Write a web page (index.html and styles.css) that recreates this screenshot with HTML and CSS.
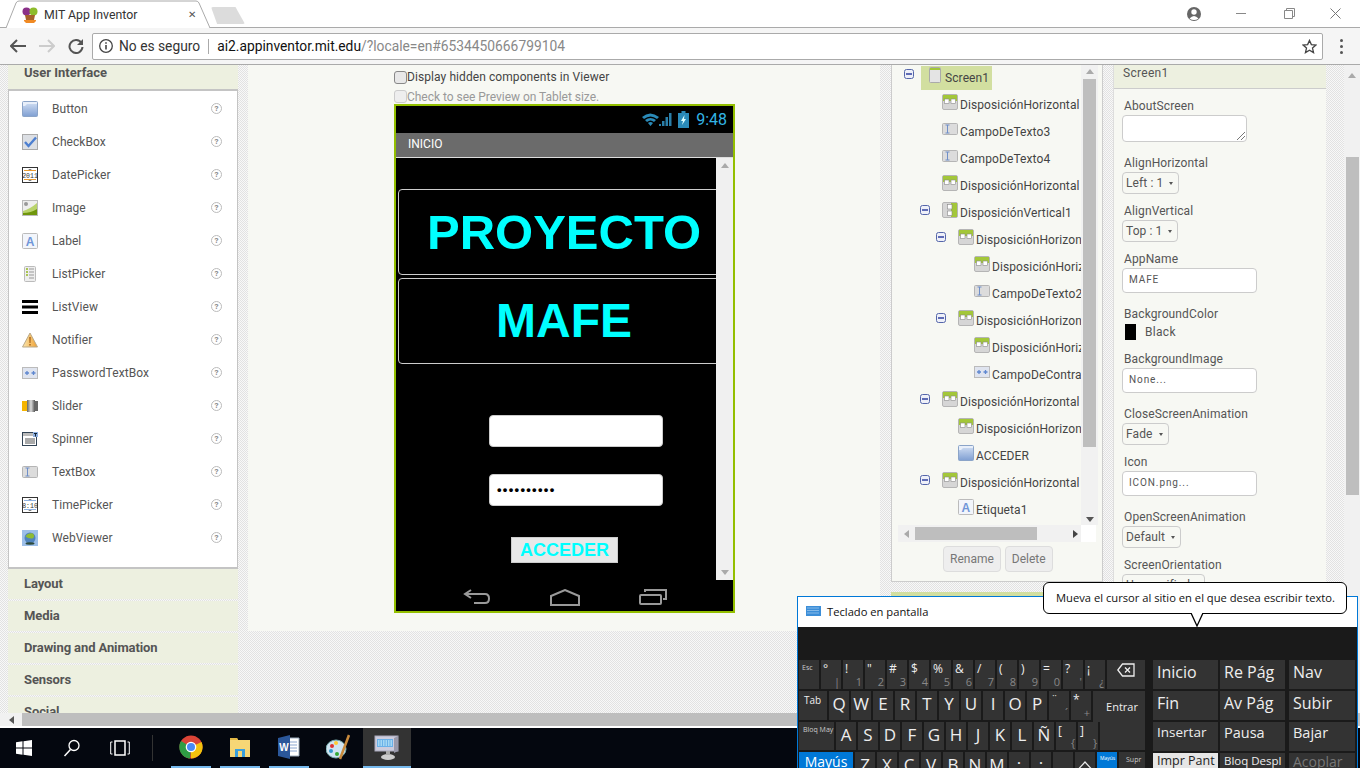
FILE: index.html
```html
<!DOCTYPE html>
<html lang="es">
<head>
<meta charset="utf-8">
<title>MIT App Inventor</title>
<link rel="stylesheet" href="styles.css">
</head>
<body>
<svg class="defs" aria-hidden="true">
  <defs>
    <linearGradient id="g-btn" x1="0" y1="0" x2="0" y2="1"><stop offset="0" stop-color="#d5e2f5"/><stop offset="1" stop-color="#7f9fd2"/></linearGradient>
    <linearGradient id="g-warn" x1="0" y1="0" x2="1" y2="0"><stop offset="0" stop-color="#fbe7b0"/><stop offset="1" stop-color="#f0a030"/></linearGradient>
    <linearGradient id="g-cyl" x1="0" y1="0" x2="1" y2="0"><stop offset="0" stop-color="#666"/><stop offset=".5" stop-color="#ddd"/><stop offset="1" stop-color="#555"/></linearGradient>
    <symbol id="i-btn" viewBox="0 0 16 16"><rect x=".5" y=".5" width="15" height="15" rx="1" fill="url(#g-btn)" stroke="#8ba4c8"/><path d="M1 1h14v2H5L3 5H1z" fill="#e8effa"/></symbol>
    <symbol id="i-check" viewBox="0 0 16 16"><rect x=".5" y=".5" width="15" height="15" fill="#dcdfe4" stroke="#aaa"/><path d="M3 8l3.500 4L14 3.500" fill="none" stroke="#4d7fd0" stroke-width="2.400"/></symbol>
    <symbol id="i-date" viewBox="0 0 16 16"><rect x=".5" y=".5" width="15" height="15" fill="#fff" stroke="#333"/><path d="M2 3.500h12M2 12.500h12" stroke="#e89a30"/><path d="M6 2h4L8 3zM6 14h4l-2-1z" fill="#555"/><text x="8" y="10.500" text-anchor="middle" font-size="6.500" font-family="Liberation Mono" fill="#333">2011</text></symbol>
    <symbol id="i-image" viewBox="0 0 16 16"><rect x=".5" y=".5" width="15" height="15" fill="#eee" stroke="#bbb"/><path d="M1 11Q8 9 15 3v12H1z" fill="#b9d36c"/><path d="M1 15v-2q8 0 14-4v6z" fill="#6f960c"/><circle cx="4" cy="4" r="2" fill="#999"/></symbol>
    <symbol id="i-label" viewBox="0 0 16 16"><rect x=".5" y=".5" width="15" height="15" rx="1" fill="#f2f5fb" stroke="#bbb"/><text x="8" y="13" text-anchor="middle" font-size="12" font-weight="700" font-family="Liberation Sans" fill="#6f95d8">A</text></symbol>
    <symbol id="i-list" viewBox="0 0 16 16"><rect x="2.500" y=".5" width="11" height="15" rx="1" fill="#eee" stroke="#bbb"/><path d="M4 3h2M4 6h2M4 9h2" stroke="#94b820" stroke-width="1.500"/><path d="M7 3h5M7 6h5M7 9h5M7 12h5" stroke="#999"/></symbol>
    <symbol id="i-lview" viewBox="0 0 16 16"><path d="M0 1h16v3H0zM0 6.500h16v3H0zM0 12h16v3H0z" fill="#000"/></symbol>
    <symbol id="i-warn" viewBox="0 0 16 16"><path d="M8 1l7.500 14H.5z" fill="url(#g-warn)" stroke="#b9a98a"/><path d="M7.300 5h1.400l-.2 6h-1zM7.300 12h1.400v1.500H7.300z" fill="#a05a10"/></symbol>
    <symbol id="i-pass" viewBox="0 0 16 16"><rect x=".5" y="2.500" width="15" height="11" fill="#dfe4ef" stroke="#bbb"/><path d="M3 8h4M5 6v4M9.500 8h4M11.500 6v4" stroke="#5f87cf" stroke-width="1.300"/></symbol>
    <symbol id="i-slider" viewBox="0 0 16 16"><rect y="3" width="6" height="10" fill="#f5b400"/><rect x="5" y="2" width="8" height="12" fill="url(#g-cyl)"/><rect x="13" y="3" width="3" height="10" fill="#666"/></symbol>
    <symbol id="i-spin" viewBox="0 0 16 16"><rect x=".5" y="1.500" width="14" height="13" fill="#fff" stroke="#345"/><rect x="1" y="2" width="10" height="3" fill="#bbb"/><rect x="11" y="1" width="5" height="5" fill="#8fb0e0"/><path d="M12 2.500h3M13.500 2.500v3" stroke="#123"/><path d="M3 8h10M3 10h10M3 12h10" stroke="#555"/></symbol>
    <symbol id="i-text" viewBox="0 0 16 16"><rect x=".5" y="2.500" width="15" height="11" rx="1" fill="#dcdcdc" stroke="#b5b5b5"/><path d="M3.500 4h4M3.500 12h4M5.500 4v8" stroke="#6f8fc8"/></symbol>
    <symbol id="i-time" viewBox="0 0 16 16"><rect x=".5" y=".5" width="15" height="15" fill="#fff" stroke="#333"/><path d="M2 3.500h12M2 12.500h12" stroke="#8fb0e0"/><path d="M6 2h4L8 3zM6 14h4l-2-1z" fill="#555"/><text x="8" y="10.500" text-anchor="middle" font-size="6.500" font-family="Liberation Mono" fill="#333">8:10</text></symbol>
    <symbol id="i-web" viewBox="0 0 16 16"><rect width="16" height="16" fill="#9dbfe9"/><circle cx="8" cy="8" r="5.500" fill="#4f83bd"/><path d="M3.500 6.500q2.500-4 7.500-3 2.500 3-.5 5-4 .5-7-2z" fill="#8fbb34"/><ellipse cx="8" cy="13.500" rx="4.500" ry="1.200" fill="#2c4a3c"/></symbol>
    <symbol id="i-hz" viewBox="0 0 16 16"><rect x=".5" y=".5" width="15" height="15" rx="1.500" fill="#d6d6d6" stroke="#b5b5b5"/><path d="M1 1h14v6H1z" fill="#a3c739"/><rect x="2.500" y="5" width="4.500" height="4.500" fill="#fff" stroke="#888" stroke-width=".6"/><rect x="9" y="5" width="4.500" height="4.500" fill="#fff" stroke="#888" stroke-width=".6"/></symbol>
    <symbol id="i-vt" viewBox="0 0 16 16"><rect x=".5" y=".5" width="15" height="15" rx="1.500" fill="#d6d6d6" stroke="#b5b5b5"/><path d="M9 1h6v14H9z" fill="#a3c739"/><rect x="5.500" y="2.500" width="4.500" height="4.500" fill="#fff" stroke="#888" stroke-width=".6"/><rect x="5.500" y="9" width="4.500" height="4.500" fill="#fff" stroke="#888" stroke-width=".6"/></symbol>
    <symbol id="i-screen" viewBox="0 0 12 16"><rect x=".5" y=".5" width="11" height="15" rx="1" fill="#e4e4e4" stroke="#aaa"/><rect x="1" y="1" width="10" height="2" fill="#a3c739"/></symbol>
    <symbol id="i-minus" viewBox="0 0 10 10"><rect x=".5" y=".5" width="9" height="9" rx="2" fill="#eef0f8" stroke="#5566aa"/><path d="M2 5h6" stroke="#223399" stroke-width="1.400"/></symbol>
  </defs>
</svg>

<header class="tabbar">
  <div class="tab">
    <svg class="tab-shape" viewBox="0 0 206 28" width="206" height="28"><path d="M0 28h1L11 3q1-2 3-2h177q2 0 3 2l11 25h1" fill="#fff" stroke="#aaa"/></svg>
    <svg class="favicon" viewBox="0 0 16 16" width="16" height="16"><circle cx="4.500" cy="4.500" r="4" fill="#8a2f88"/><circle cx="11.500" cy="4.500" r="4" fill="#8dbb2c"/><path d="M3 8h10l-1 5H4z" fill="#a5602a"/><path d="M2 13h12v1l-2 2H4l-2-2z" fill="#f08a24"/></svg>
    <span class="tab-title">MIT App Inventor</span>
    <span class="tab-close">✕</span>
  </div>
  <div class="newtab"></div>
  <div class="winctl">
    <svg width="16" height="16" viewBox="0 0 16 16"><circle cx="8" cy="8" r="7" fill="#666"/><circle cx="8" cy="6" r="2.700" fill="#fff"/><path d="M3.500 12.500q4.500-5 9 0Q8 15.500 3.500 12.500z" fill="#fff"/></svg>
    <span class="wc-min"></span>
    <svg width="11" height="11" viewBox="0 0 11 11"><path d="M2.500 2.500V.5h8v8h-2M.5 2.500h8v8h-8z" fill="none" stroke="#888"/></svg>
    <svg width="11" height="11" viewBox="0 0 11 11"><path d="M.5.500l10 10M10.500.5l-10 10" stroke="#777"/></svg>
  </div>
</header>

<nav class="toolbar">
  <svg class="tool" width="16" height="14" viewBox="0 0 16 14"><path d="M7 1L1 7l6 6M1 7h15" fill="none" stroke="#555" stroke-width="2"/></svg>
  <svg class="tool" width="16" height="14" viewBox="0 0 16 14"><path d="M9 1l6 6-6 6M15 7H0" fill="none" stroke="#ccc" stroke-width="2"/></svg>
  <svg class="tool" width="16" height="16" viewBox="0 0 16 16"><path d="M13.500 5A6.500 6.500 0 1 0 14.500 9" fill="none" stroke="#555" stroke-width="2"/><path d="M15 1v6H9z" fill="#555"/></svg>
  <div class="omnibox">
    <svg width="14" height="14" viewBox="0 0 14 14"><circle cx="7" cy="7" r="6.300" fill="none" stroke="#444" stroke-width="1.300"/><path d="M6.200 6h1.600v4.500H6.200zM6.200 3.200h1.600v1.600H6.200z" fill="#444"/></svg>
    <span class="insecure">No es seguro</span>
    <span class="omni-sep"></span>
    <span class="url"><b>ai2.appinventor.mit.edu</b>/?locale=en#6534450666799104</span>
    <svg class="star" width="15" height="15" viewBox="0 0 16 16"><path d="M8 1.500l2 4.500 4.900.5-3.700 3.200 1.100 4.800L8 12l-4.300 2.500 1.100-4.800L1.100 6.500 6 6z" fill="none" stroke="#444" stroke-width="1.400"/></svg>
  </div>
  <div class="dots"><i></i><i></i><i></i></div>
</nav>

<main class="page">
  <div class="workspace">
    <section class="palette">
      <h2 class="phead">User Interface</h2>
      <ul class="plist">
        <li class="pitem"><svg class="pic"><use href="#i-btn"/></svg><span class="pname">Button</span><span class="help">?</span></li>
        <li class="pitem"><svg class="pic"><use href="#i-check"/></svg><span class="pname">CheckBox</span><span class="help">?</span></li>
        <li class="pitem"><svg class="pic"><use href="#i-date"/></svg><span class="pname">DatePicker</span><span class="help">?</span></li>
        <li class="pitem"><svg class="pic"><use href="#i-image"/></svg><span class="pname">Image</span><span class="help">?</span></li>
        <li class="pitem"><svg class="pic"><use href="#i-label"/></svg><span class="pname">Label</span><span class="help">?</span></li>
        <li class="pitem"><svg class="pic"><use href="#i-list"/></svg><span class="pname">ListPicker</span><span class="help">?</span></li>
        <li class="pitem"><svg class="pic"><use href="#i-lview"/></svg><span class="pname">ListView</span><span class="help">?</span></li>
        <li class="pitem"><svg class="pic"><use href="#i-warn"/></svg><span class="pname">Notifier</span><span class="help">?</span></li>
        <li class="pitem"><svg class="pic"><use href="#i-pass"/></svg><span class="pname">PasswordTextBox</span><span class="help">?</span></li>
        <li class="pitem"><svg class="pic"><use href="#i-slider"/></svg><span class="pname">Slider</span><span class="help">?</span></li>
        <li class="pitem"><svg class="pic"><use href="#i-spin"/></svg><span class="pname">Spinner</span><span class="help">?</span></li>
        <li class="pitem"><svg class="pic"><use href="#i-text"/></svg><span class="pname">TextBox</span><span class="help">?</span></li>
        <li class="pitem"><svg class="pic"><use href="#i-time"/></svg><span class="pname">TimePicker</span><span class="help">?</span></li>
        <li class="pitem"><svg class="pic"><use href="#i-web"/></svg><span class="pname">WebViewer</span><span class="help">?</span></li>
      </ul>
      <div class="acc">Layout</div>
      <div class="acc">Media</div>
      <div class="acc">Drawing and Animation</div>
      <div class="acc">Sensors</div>
      <div class="acc">Social</div>
    </section>

    <section class="viewer">
      <label class="vcheck"><span class="cbox"></span>Display hidden components in Viewer</label>
      <label class="vcheck off"><span class="cbox"></span>Check to see Preview on Tablet size.</label>
      <div class="phone">
        <div class="status">
          <svg width="34" height="17" viewBox="0 0 34 17"><path d="M1 6q8-7 17 0l-2 2q-6.500-5-13 0zM4 9q5.500-4 11 0l-2 2q-3.500-3-7 0zM7 12q2.500-2 5 0l-2.500 3z" fill="#2a8ab8"/><path d="M18 15h2v-2h-2zM21 15h2.500V10H21zM24.500 15H27V6h-2.500zM28 15h2.500V2H28z" fill="#2a7ea8"/></svg>
          <svg width="11" height="17" viewBox="0 0 11 17"><path d="M3.500 0h4v2H11v15H0V2h3.500z" fill="#2a8ab8"/><path d="M6.500 4L3 10h2l-1 4 4-6H6z" fill="#dff"/></svg>
          <span class="clock">9:48</span>
        </div>
        <div class="title-bar">INICIO</div>
        <div class="screen">
          <div class="scr-main">
            <div class="bigbox big-l">PROYECTO</div>
            <div class="bigbox">MAFE</div>
            <div class="field field-user"></div>
            <div class="field field-pass">••••••••••</div>
            <div class="acceder">ACCEDER</div>
          </div>
          <div class="scr-scroll"><i class="tri up"></i><i class="tri down"></i></div>
        </div>
        <div class="navbar">
          <svg width="28" height="16" viewBox="0 0 28 16"><path d="M8 1L2 5l6 4M2 5h20q4 0 4 4.500T22 14H11" fill="none" stroke="#999" stroke-width="2"/></svg>
          <svg width="30" height="17" viewBox="0 0 30 17"><path d="M1 7l14-6 14 6v9H1z" fill="none" stroke="#999" stroke-width="2"/></svg>
          <svg width="28" height="16" viewBox="0 0 28 16"><rect x="1" y="6" width="21" height="9" rx="1" fill="none" stroke="#999" stroke-width="2"/><path d="M6 3V1h21v9h-3" fill="none" stroke="#999" stroke-width="2"/></svg>
        </div>
      </div>
    </section>

    <div class="compcol">
      <section class="comps">
        <div class="treewrap">
          <ul class="tree">
            <li class="node first"><svg class="tog"><use href="#i-minus"/></svg><span class="sel"><svg class="nic-s"><use href="#i-screen"/></svg>Screen1</span></li>
            <li class="node l1"><svg class="nic"><use href="#i-hz"/></svg>DisposiciónHorizontal</li>
            <li class="node l1"><svg class="nic"><use href="#i-text"/></svg>CampoDeTexto3</li>
            <li class="node l1"><svg class="nic"><use href="#i-text"/></svg>CampoDeTexto4</li>
            <li class="node l1"><svg class="nic"><use href="#i-hz"/></svg>DisposiciónHorizontal</li>
            <li class="node l1 p"><svg class="tog"><use href="#i-minus"/></svg><svg class="nic"><use href="#i-vt"/></svg>DisposiciónVertical1</li>
            <li class="node l2 p"><svg class="tog"><use href="#i-minus"/></svg><svg class="nic"><use href="#i-hz"/></svg>DisposiciónHorizontal</li>
            <li class="node l3"><svg class="nic"><use href="#i-hz"/></svg>DisposiciónHorizontal</li>
            <li class="node l3"><svg class="nic"><use href="#i-text"/></svg>CampoDeTexto2</li>
            <li class="node l2 p"><svg class="tog"><use href="#i-minus"/></svg><svg class="nic"><use href="#i-hz"/></svg>DisposiciónHorizontal</li>
            <li class="node l3"><svg class="nic"><use href="#i-hz"/></svg>DisposiciónHorizontal</li>
            <li class="node l3"><svg class="nic"><use href="#i-pass"/></svg>CampoDeContraseña</li>
            <li class="node l1 p"><svg class="tog"><use href="#i-minus"/></svg><svg class="nic"><use href="#i-hz"/></svg>DisposiciónHorizontal</li>
            <li class="node l2"><svg class="nic"><use href="#i-hz"/></svg>DisposiciónHorizontal</li>
            <li class="node l2"><svg class="nic"><use href="#i-btn"/></svg>ACCEDER</li>
            <li class="node l1 p"><svg class="tog"><use href="#i-minus"/></svg><svg class="nic"><use href="#i-hz"/></svg>DisposiciónHorizontal</li>
            <li class="node l2"><svg class="nic"><use href="#i-label"/></svg>Etiqueta1</li>
          </ul>
          <div class="vs-tree"><i class="tri up"></i><b class="vs-thumb"></b><i class="tri down dark"></i></div>
        </div>
        <div class="hs-tree"><div class="hs-track"><i class="tri left"></i><b class="hs-thumb"></b><i class="tri right"></i></div></div>
        <div class="comp-btns"><span class="cbtn">Rename</span><span class="cbtn">Delete</span></div>
      </section>
      <div class="mediahead"></div>
    </div>

    <section class="props">
      <h2 class="prhead">Screen1</h2>
      <div class="prbody">
        <div class="plabel">AboutScreen</div>
        <div class="ctl area"><svg width="8" height="8" viewBox="0 0 8 8"><path d="M8 0L0 8M8 4L4 8" stroke="#777"/></svg></div>
        <div class="plabel">AlignHorizontal</div>
        <div class="ctl sel-ctl w57">Left : 1<i></i></div>
        <div class="plabel">AlignVertical</div>
        <div class="ctl sel-ctl w56">Top : 1<i></i></div>
        <div class="plabel">AppName</div>
        <div class="ctl txt">MAFE</div>
        <div class="plabel">BackgroundColor</div>
        <div class="colorrow"><span class="swatch"></span>Black</div>
        <div class="plabel">BackgroundImage</div>
        <div class="ctl txt">None...</div>
        <div class="plabel">CloseScreenAnimation</div>
        <div class="ctl sel-ctl w47">Fade<i></i></div>
        <div class="plabel">Icon</div>
        <div class="ctl txt">ICON.png...</div>
        <div class="plabel">OpenScreenAnimation</div>
        <div class="ctl sel-ctl w59">Default<i></i></div>
        <div class="plabel">ScreenOrientation</div>
        <div class="ctl sel-ctl w83">Unspecified<i></i></div>
      </div>
    </section>

    <div class="vs-page"><i class="tri up"></i><b class="vs-page-thumb"></b></div>
  </div>
  <div class="hs-page"><span class="hs-btn"><i class="tri left dark"></i></span><b class="hs-page-thumb"></b></div>
</main>

<footer class="taskbar">
  <span class="tb tb-plain"><svg width="16" height="16" viewBox="0 0 16 16"><path d="M0 2.300l6.500-1v6.200H0zM7.500 1.200L16 0v7.500H7.500zM0 8.500h6.500v6.200l-6.500-1zM7.500 8.500H16V16l-8.500-1.200z" fill="#fff"/></svg></span>
  <span class="tb tb-plain"><svg width="18" height="18" viewBox="0 0 18 18"><circle cx="11" cy="6.500" r="5" fill="none" stroke="#fff" stroke-width="1.300"/><path d="M7.500 10.500L1.500 17" stroke="#fff" stroke-width="1.500"/></svg></span>
  <span class="tb tb-plain"><svg width="20" height="16" viewBox="0 0 20 16"><path d="M5 1h10v14H5z" fill="none" stroke="#fff" stroke-width="1.500"/><path d="M2.500 2H.7v12h1.800M17.500 2h1.800v12h-1.800" fill="none" stroke="#fff"/></svg></span>
  <span class="tb-sep"></span>
  <span class="tb tb-app"><svg width="24" height="24" viewBox="0 0 24 24"><circle cx="12" cy="12" r="11.500" fill="#db4437"/><path d="M12 12L22.500 7A11.500 11.500 0 0 1 12 23.500z" fill="#f4c20d"/><path d="M12 12l-1 11.500A11.500 11.500 0 0 1 2 6z" fill="#2f9e44"/><circle cx="12" cy="12" r="5.300" fill="#fff"/><circle cx="12" cy="12" r="4" fill="#4a8af4"/></svg></span>
  <span class="tb tb-app"><svg width="22" height="22" viewBox="0 0 22 22"><path d="M1 2h7l1 2h12v17H1z" fill="#f6d776"/><path d="M1 2h7l1 2H1z" fill="#e2b846"/><path d="M6 13h10v8H6z" fill="#3aa0dc"/><path d="M9 15h4v6H9z" fill="#f6d776"/></svg></span>
  <span class="tb tb-app"><svg width="22" height="24" viewBox="0 0 22 24"><path d="M9 3h12v18H9z" fill="#fff" stroke="#9ab"/><path d="M11 7h8M11 10h8M11 13h8M11 16h8" stroke="#8aa6d0"/><path d="M0 3l12-3v24L0 21z" fill="#2b579a"/><text x="6" y="16" text-anchor="middle" font-size="10" font-weight="700" font-family="Liberation Sans" fill="#fff">W</text></svg></span>
  <span class="tb tb-idle"><svg width="24" height="26" viewBox="0 0 24 26"><ellipse cx="10" cy="15" rx="10" ry="9" fill="#cfe4f2" stroke="#7aa"/><circle cx="6" cy="12" r="2" fill="#d33"/><circle cx="10" cy="9" r="2" fill="#fc3"/><circle cx="5" cy="17" r="2" fill="#39c"/><circle cx="11" cy="20" r="2" fill="#3a3"/><path d="M23 1l-9 24" stroke="#c98a3c" stroke-width="2.500"/></svg></span>
  <span class="tb tb-active"><svg width="26" height="28" viewBox="0 0 26 28"><rect x="1" y="3" width="23" height="15" fill="#ccd" stroke="#aab"/><rect x="3" y="6" width="16" height="8" fill="#6ab0e8"/><path d="M4 8h14M4 10h14M4 12h14" stroke="#dff" stroke-dasharray="1.500 1"/><path d="M20 5l4-2v15l-4 2z" fill="#99a"/><ellipse cx="14" cy="24" rx="7" ry="3" fill="#ccc"/><path d="M12 18h4v4h-4z" fill="#aaa"/></svg></span>
</footer>

<section class="kbd">
  <div class="kbd-title">
    <svg width="15" height="10" viewBox="0 0 15 10"><rect width="15" height="10" fill="#3c8ed8"/><path d="M1.500 2h12M1.500 4.500h12M1.500 7h12" stroke="#cfe6fa" stroke-dasharray="1 1"/></svg>
    <span>Teclado en pantalla</span>
  </div>
  <div class="kbd-body">
    <div class="kbd-left">
      <div class="krow">
        <span class="key k-tiny w-esc">Esc</span>
        <span class="key dual"><em>°</em><small>|</small></span>
        <span class="key dual"><em>!</em><small>1</small></span>
        <span class="key dual"><em>"</em><small>2</small></span>
        <span class="key dual"><em>#</em><small>3</small></span>
        <span class="key dual"><em>$</em><small>4</small></span>
        <span class="key dual"><em>%</em><small>5</small></span>
        <span class="key dual"><em>&amp;</em><small>6</small></span>
        <span class="key dual"><em>/</em><small>7</small></span>
        <span class="key dual"><em>(</em><small>8</small></span>
        <span class="key dual"><em>)</em><small>9</small></span>
        <span class="key dual"><em>=</em><small>0</small></span>
        <span class="key dual"><em>?</em><small>'</small></span>
        <span class="key dual"><em>¡</em><small>¿</small></span>
        <span class="key w-back"><svg width="18" height="14" viewBox="0 0 18 14"><path d="M5.500 1H17v12H5.500L.8 7zM8 4.500l5 5M13 4.500l-5 5" fill="none" stroke="#eee" stroke-width="1.300"/></svg></span>
      </div>
      <div class="krow">
        <span class="key k-small w-tab">Tab</span>
        <span class="key">Q</span><span class="key">W</span><span class="key">E</span><span class="key">R</span><span class="key">T</span><span class="key">Y</span><span class="key">U</span><span class="key">I</span><span class="key">O</span><span class="key">P</span>
        <span class="key dual"><em>¨</em><small>´</small></span>
        <span class="key dual"><em>*</em><small>+</small></span>
        <span class="key k-enter w-ent1">Entrar</span>
      </div>
      <div class="krow">
        <span class="key k-tiny w-caps">Bloq May</span>
        <span class="key">A</span><span class="key">S</span><span class="key">D</span><span class="key">F</span><span class="key">G</span><span class="key">H</span><span class="key">J</span><span class="key">K</span><span class="key">L</span><span class="key">Ñ</span>
        <span class="key dual"><em>[</em><small>{</small></span>
        <span class="key dual"><em>]</em><small>}</small></span>
        <span class="key w-ent2"></span>
      </div>
      <div class="krow">
        <span class="key k-blue w-shift">Mayús</span>
        <span class="key">Z</span><span class="key">X</span><span class="key">C</span><span class="key">V</span><span class="key">B</span><span class="key">N</span><span class="key">M</span>
        <span class="key">;</span><span class="key">:</span><span class="key">_</span>
        <span class="key"><svg width="14" height="8" viewBox="0 0 14 8"><path d="M1 7.500L7 1l6 6.500" fill="none" stroke="#eee" stroke-width="1.200"/></svg></span>
        <span class="key k-tiny k-blue2">Mayús</span>
        <span class="key k-tiny w-supr">Supr</span>
      </div>
    </div>
    <div class="kbd-right">
      <span class="nkey">Inicio</span><span class="nkey">Re Pág</span><span class="nkey w-nav">Nav</span>
      <span class="nkey">Fin</span><span class="nkey">Av Pág</span><span class="nkey w-nav">Subir</span>
      <span class="nkey n-15">Insertar</span><span class="nkey n-16">Pausa</span><span class="nkey n-16 w-nav">Bajar</span>
      <span class="nkey n-light">Impr Pant</span><span class="nkey n-13">Bloq Despl</span><span class="nkey n-off w-nav">Acoplar</span>
    </div>
  </div>
</section>

<div class="tip">Mueva el cursor al sitio en el que desea escribir texto.
  <svg class="tip-tail" width="14" height="15" viewBox="0 0 14 15"><path d="M1 0l6 13 6-13" fill="#fff" stroke="#000" stroke-width="1.300"/></svg>
</div>
</body>
</html>
```

FILE: styles.css
```css
* { box-sizing: border-box; }
html, body { margin: 0; padding: 0; }
body {
  width: 1360px; height: 768px; overflow: hidden; position: relative;
  display: flex; flex-direction: column;
  font-family: Roboto, "Liberation Sans", sans-serif; font-size: 12px; color: #444; background: #fff;
}
ul { list-style: none; margin: 0; padding: 0; }
h2 { margin: 0; }
i, em { font-style: normal; }
.defs { display: block; width: 0; height: 0; flex: none; }

/* browser chrome */
.tabbar { height: 28px; flex: none; display: flex; align-items: flex-start; padding-left: 5px; border-bottom: 1px solid #aaa; background: #fff; }
.tab { position: relative; width: 206px; height: 28px; display: flex; align-items: center; padding: 1px 15px 0 17px; }
.tab-shape { position: absolute; left: 0; top: 0; }
.favicon { position: relative; flex: none; }
.tab-title { position: relative; margin-left: 6px; font-size: 12.300px; color: #333; flex: 1; }
.tab-close { position: relative; font-size: 10px; color: #555; }
.newtab { width: 34px; height: 17px; margin-top: 7px; background: #dcdcdc; clip-path: polygon(0 0, 72% 0, 100% 100%, 18% 100%); border-radius: 2px; }
.winctl { margin-left: auto; display: flex; align-items: center; gap: 35px; height: 27px; padding-right: 19px; }
.wc-min { width: 10px; height: 1px; background: #888; margin: 0 3px 0 -1px; }
.toolbar { height: 37px; flex: none; display: flex; align-items: center; padding: 0 0 0 10px; background: #f5f5f5; border-bottom: 1px solid #aaa; }
.tool { margin-right: 13px; flex: none; }
.omnibox { width: 1231px; height: 27px; margin-left: -5px; display: flex; align-items: center; padding: 0 5px 0 6px; background: #fff; border: 1px solid #aaa; border-radius: 2px; }
.insecure { margin-left: 6px; font-size: 13.800px; color: #333; }
.omni-sep { width: 1px; height: 15px; background: #aaa; margin: 0 8px; }
.url { font-size: 13.800px; color: #888; flex: 1; }
.url b { font-weight: 400; color: #111; }
.dots { display: flex; flex-direction: column; gap: 3px; margin-left: 17px; }
.dots i { width: 3px; height: 3px; border-radius: 50%; background: #555; }

/* page */
.page { flex: none; height: 663px; display: flex; flex-direction: column; overflow: hidden; background: repeating-conic-gradient(#e2e2e2 0 25%, #f8f8f8 0 50%) 0 0 / 2px 2px; }
.workspace { height: 648px; flex: none; display: flex; padding-left: 8px; overflow: hidden; }
.tri { display: block; width: 0; height: 0; border: 4px solid transparent; }
.tri.up { border-top: 0; border-bottom: 5px solid #aaa; }
.tri.down { border-bottom: 0; border-top: 5px solid #aaa; }
.tri.down.dark { border-top-color: #555; }
.tri.left { border-left: 0; border-right: 5px solid #aaa; }
.tri.right { border-right: 0; border-left: 5px solid #444; }
.tri.left.dark { border-right-color: #555; }

/* palette */
.palette { width: 230px; flex: none; display: flex; flex-direction: column; }
.phead { height: 24px; flex: none; padding: 0 16px; font-size: 13px; font-weight: 700; color: #555; line-height: 15px; background: #edf0e0; }
.plist { height: 480px; flex: none; padding-top: 1px; background: #fff; border: 1px solid #c4c4c4; border-width: 2px 1px 2px 1px; }
.pitem { height: 33px; display: flex; align-items: center; padding-left: 13px; }
.pic { width: 16px; height: 16px; flex: none; margin-right: 14px; }
.pname { flex: 1; font-size: 12px; color: #555; letter-spacing: .07px; }
.help { width: 11px; height: 11px; margin-right: 15px; border: 1px solid #bbb; border-radius: 50%; font-size: 8px; font-weight: 700; line-height: 9px; text-align: center; color: #888; }
.acc { height: 30px; flex: none; margin-bottom: 2px; padding-left: 16px; font-size: 13px; font-weight: 700; line-height: 30px; letter-spacing: -.1px; color: #555; background: #edf0e0; }

/* viewer */
.viewer { width: 632px; flex: none; margin-left: 10px; height: 566px; padding: 4px 0 0 146px; background: #f7f8f3; }
.vcheck { display: flex; align-items: center; height: 16px; margin-bottom: 4px; font-size: 12px; color: #444; letter-spacing: .08px; }
.vcheck.off { color: #999; height: 15px; margin-bottom: 0; letter-spacing: -.03px; }
.cbox { width: 13px; height: 13px; flex: none; border: 1px solid #888; border-radius: 3px; background: #e8e8e8; }
.vcheck.off .cbox { border-color: #ccc; background: #eee; }
.phone { width: 341px; height: 509px; border: 2px solid #93bf00; background: #000; display: flex; flex-direction: column; }
.status { height: 27px; flex: none; display: flex; align-items: center; justify-content: flex-end; gap: 3px; padding-right: 6px; }
.clock { margin-left: 4px; font-size: 16px; color: #33b5e5; }
.title-bar { height: 25px; flex: none; padding-left: 12px; line-height: 22px; font-size: 12px; color: #fff; background: #6b6b6b; border-bottom: 1px solid #ddd; }
.screen { height: 422px; flex: none; display: flex; overflow: hidden; }
.scr-main { width: 320px; flex: none; overflow: hidden; padding: 31px 0 0 2px; }
.bigbox { width: 332px; height: 86px; margin-bottom: 3px; border: 1px solid #ccc; border-radius: 4px; text-align: center; font: 700 48px/84px "Liberation Sans", sans-serif; color: #0ff; }
.big-l { font-size: 49px; }
.field { width: 174px; height: 32px; margin-left: 91px; border: 1px solid #ccc; border-radius: 4px; background: #fff; }
.field-user { margin-top: 51px; }
.field-pass { margin-top: 27px; padding-left: 7px; font: 700 13px/29px "Liberation Sans", sans-serif; letter-spacing: 1.300px; color: #000; }
.acceder { width: 107px; height: 26px; margin: 31px 0 0 113px; text-align: center; font: 700 18px/24px "Liberation Sans", sans-serif; color: #0ff; background: #e8e8e8; border: 1px solid #ccc; }
.scr-scroll { width: 17px; flex: none; background: #f0f0f0; display: flex; flex-direction: column; align-items: center; justify-content: space-between; padding: 5px 0; }
.navbar { height: 31px; flex: none; display: flex; align-items: center; padding: 3px 0 0 67px; gap: 59px; }

/* components */
.compcol { width: 212px; flex: none; margin-left: 11px; display: flex; flex-direction: column; gap: 10px; }
.comps { height: 517px; flex: none; padding: 0 6px; background: #f7f8f3; border: 1px solid #ccc; border-width: 0 1px 1px 1px; }
.treewrap { display: flex; height: 460px; }
.tree { width: 183px; flex: none; overflow: hidden; }
.node { height: 27px; width: 300px; display: flex; align-items: center; font-size: 12px; color: #444; letter-spacing: .1px; white-space: nowrap; }
.node.first { height: 26px; padding-left: 6px; align-items: flex-start; }
.tog { width: 10px; height: 10px; flex: none; margin: -5px 6px 0 0; }
.first .tog { margin: 4px 7px 0 0; }
.sel { height: 24px; width: 71px; margin-top: 1px; display: flex; align-items: center; padding-left: 8px; background: #d2dfa0; }
.nic-s { width: 12px; height: 16px; flex: none; margin: -6px 4px 0 0; }
.nic { width: 16px; height: 16px; flex: none; margin: -6px 2px 0 0; }
.l1 { padding-left: 44px; }
.l2 { padding-left: 60px; }
.l3 { padding-left: 76px; }
.l1.p { padding-left: 22px; }
.l2.p { padding-left: 38px; }
.l1.p .tog { margin-right: 12px; }
.l2.p .tog { margin-right: 12px; }
.vs-tree { width: 17px; flex: none; display: flex; flex-direction: column; align-items: center; background: #f1f1f1; padding-top: 4px; }
.vs-thumb { display: block; width: 13px; height: 368px; margin: 5px 0 70px; background: #bebebe; }
.hs-tree { margin-top: 0; height: 17px; background: #fff; }
.hs-track { width: 183px; height: 17px; display: flex; align-items: center; background: #f1f1f1; padding: 0 3px 0 6px; }
.hs-thumb { display: block; width: 122px; height: 13px; margin: 0 auto 0 6px; background: #bebebe; }
.comp-btns { display: flex; gap: 4px; margin: 4px 0 0 45px; }
.cbtn { height: 26px; padding: 0 6px; line-height: 24px; font-size: 12px; color: #777; background: #eee; border: 1px solid #ddd; border-radius: 4px; }
.mediahead { height: 24px; flex: none; background: #d2dfa0; }

/* properties */
.props { width: 213px; flex: none; margin-left: 10px; background: #f7f8f3; border-left: 1px solid #ddd; overflow: hidden; }
.prhead { height: 24px; padding-left: 9px; font-size: 12px; font-weight: 400; line-height: 17px; letter-spacing: .3px; color: #555; background: #edf0e0; border-bottom: 1px solid #ccc; }
.prbody { padding: 10px 0 0 8px; }
.plabel { height: 14px; margin-bottom: 2px; padding-left: 2px; font-size: 12px; line-height: 14px; color: #555; letter-spacing: .12px; }
.ctl { background: #fff; border: 1px solid #ccc; border-radius: 4px; }
.area { width: 125px; height: 27px; margin-bottom: 14px; display: flex; align-items: flex-end; justify-content: flex-end; padding: 0 1px 1px 0; }
.sel-ctl { height: 22px; margin-bottom: 10px; padding-left: 3px; font-size: 12px; line-height: 20px; color: #555; background: #f7f8f3; display: flex; align-items: center; letter-spacing: .1px; }
.sel-ctl i { margin: 1px 5px 0 auto; width: 0; height: 0; border: 2.500px solid transparent; border-top: 3px solid #555; border-bottom: 0; }
.w47 { width: 47px; } .w56 { width: 56px; } .w57 { width: 57px; } .w59 { width: 59px; } .w83 { width: 83px; }
.txt { width: 135px; height: 25px; margin-bottom: 14px; padding-left: 6px; font-size: 10px; line-height: 22px; letter-spacing: .9px; color: #555; }
.colorrow { height: 16px; margin: 3px 0 12px 3px; display: flex; align-items: center; font-size: 12px; color: #555; letter-spacing: .3px; }
.swatch { width: 11px; height: 16px; margin-right: 9px; background: #000; }
.vs-page { width: 16px; flex: none; margin-left: 18px; background: #f1f1f1; display: flex; flex-direction: column; align-items: center; padding-top: 8px; }
.vs-page-thumb { display: block; width: 13px; height: 338px; margin-top: 79px; background: #bebebe; }
.hs-page { height: 15px; flex: none; display: flex; border-bottom: 2px solid #fff; background: #f1f1f1; }
.hs-btn { width: 22px; flex: none; display: flex; align-items: center; justify-content: center; }
.hs-page-thumb { flex: 1; display: block; background: #bebebe; }

/* taskbar */
.taskbar { height: 40px; flex: none; display: flex; background: #04070f; }
.tb { display: flex; align-items: center; justify-content: center; flex: none; height: 40px; }
.tb-plain { width: 48px; }
.tb-sep { width: 1px; height: 26px; margin: 7px 18px 0 8px; background: #333; flex: none; }
.tb-app { width: 40px; margin-right: 9px; border-bottom: 2px solid #76b9ed; }
.tb-idle { width: 40px; margin-right: 5px; border-bottom: 2px solid transparent; }
.tb-active { width: 48px; background: #333; border-bottom: 2px solid #76b9ed; }

/* on-screen keyboard window */
.kbd { position: absolute; left: 797px; top: 596px; width: 561px; height: 172px; overflow: hidden; background: #1a1a1a; border: 1px solid #0078d7; border-bottom: 0; font-family: "Open Sans", "Liberation Sans", sans-serif; }
.kbd-title { height: 30px; display: flex; align-items: center; gap: 6px; padding: 0 0 2px 8px; background: #fff; font-size: 11.200px; color: #111; }
.kbd-body { display: flex; padding: 33px 0 0 1px; gap: 7px; }
.kbd-left { width: 347px; flex: none; display: flex; flex-direction: column; gap: 2px; }
.krow { display: flex; gap: 2px; height: 29px; flex: none; }
.krow:nth-child(3) { height: 28px; }
.krow:nth-child(2) .w-ent1 { height: 31px; }
.krow:nth-child(3) .w-ent2 { margin-top: -2px; height: 30px; }
.key { width: 20px; flex: none; display: flex; align-items: center; justify-content: center; padding-bottom: 4px; background: #333; color: #eee; font-size: 17px; line-height: 1; }
.dual { justify-content: space-between; padding: 3px 1px 2px 2px; }
.dual em { align-self: flex-start; font-size: 12px; color: #eee; }
.dual small { align-self: flex-end; font-size: 11px; color: #888; }
.k-tiny { font-size: 7px; align-items: flex-start; padding-top: 4px; color: #ccc; justify-content: flex-start; padding-left: 4px; white-space: nowrap; }
.k-small { font-size: 10px; align-items: flex-start; padding-top: 4px; justify-content: flex-start; padding-left: 5px; }
.w-esc { width: 20px; padding-left: 3px; }
.w-back { width: 38px; align-items: flex-start; padding-top: 3px; }
.w-tab { width: 28px; }
.w-ent1 { width: 52px; font-size: 11px; padding: 0 0 0 6px; }
.w-caps { width: 35px; }
.w-ent2 { width: 45px; }
.k-blue { width: 54px; background: #0078d7; color: #fff; font-size: 14px; padding-bottom: 10px; }
.k-blue2 { background: #0078d7; color: #fff; padding-left: 3px; font-size: 5px; }
.w-supr { width: 26px; padding-left: 7px; }
.kbd-right { display: grid; grid-template-columns: 65px 65px 66px; column-gap: 2px; grid-auto-rows: 29px; row-gap: 2px; }
.w-nav { margin-left: 2px; width: 66px; }
.nkey { display: block; padding-left: 4px; background: #333; color: #eee; font-size: 16px; line-height: 24px; white-space: nowrap; }
.n-15 { font-size: 13.500px; line-height: 21px; }
.n-16 { font-size: 14.500px; line-height: 22px; }
.n-13 { font-size: 11.500px; line-height: 15px; }
.n-light { background: #e6e6e6; color: #222; font-size: 12.500px; line-height: 16px; }
.n-off { color: #777; font-size: 14px; line-height: 18px; }

.tip { position: absolute; left: 1043px; top: 582px; width: 304px; height: 32px; padding-left: 12px; background: #fff; border: 1px solid #000; border-radius: 6px; font-family: "Open Sans", "Liberation Sans", sans-serif; font-size: 11.200px; line-height: 30px; color: #111; white-space: nowrap; }
.tip-tail { position: absolute; left: 146px; top: 30px; }
```
